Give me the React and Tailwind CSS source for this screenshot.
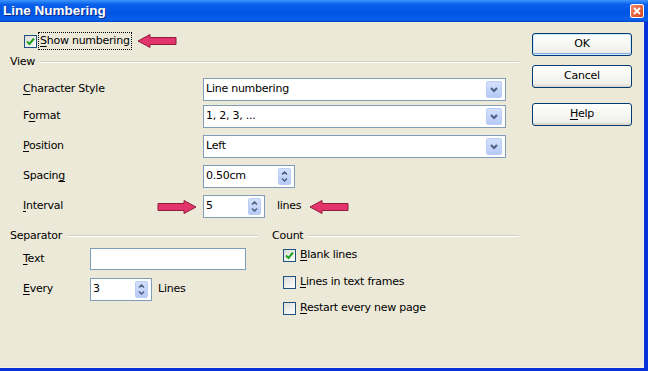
import React from 'react';

const U = ({ children }) => <span className="underline underline-offset-2">{children}</span>;

const Check = ({ checked }) => (
  <span className="flex h-[13px] w-[13px] shrink-0 items-center justify-center border border-[#1c5180] bg-[linear-gradient(135deg,#dcdcd7,#ffffff)]">
    {checked && (
      <svg width="9" height="9" viewBox="0 0 9 9">
        <path d="M1 4.5 L3.5 7 L8 1.5" fill="none" stroke="#21a121" strokeWidth="2" />
      </svg>
    )}
  </span>
);

const Dropdown = ({ value }) => (
  <div className="flex h-[23px] w-[303px] items-center justify-between border border-[#7f9db9] bg-white pl-[2px] pr-[3px]">
    <span>{value}</span>
    <span className="flex h-[17px] w-[16px] items-center justify-center rounded-[2px] border border-[#b9cdf6] bg-[linear-gradient(#d4e1fc,#b6caf6)]">
      <svg width="8" height="6" viewBox="0 0 8 6">
        <path d="M1 1 L4 4 L7 1" fill="none" stroke="#4d6185" strokeWidth="2" />
      </svg>
    </span>
  </div>
);

const Spin = ({ value, w }) => (
  <div className={`flex h-[23px] ${w} items-center justify-between border border-[#7f9db9] bg-white pl-[2px] pr-[3px]`}>
    <span>{value}</span>
    <span className="flex h-[17px] w-[13px] flex-col items-center justify-center gap-[3px] rounded-[2px] border border-[#b9cdf6] bg-[linear-gradient(#d4e1fc,#b6caf6)]">
      <svg width="7" height="4" viewBox="0 0 7 4">
        <path d="M1 3.5 L3.5 1 L6 3.5" fill="none" stroke="#4d6185" strokeWidth="1.5" />
      </svg>
      <svg width="7" height="4" viewBox="0 0 7 4">
        <path d="M1 0.5 L3.5 3 L6 0.5" fill="none" stroke="#4d6185" strokeWidth="1.5" />
      </svg>
    </span>
  </div>
);

const Arrow = ({ dir = 'left' }) => (
  <svg width="40" height="14" viewBox="0 0 40 14" className={dir === 'right' ? 'shrink-0 -scale-x-100' : 'shrink-0'}>
    <polygon
      points="1,7 13,0.5 13,3.5 39,3.5 39,10.5 13,10.5 13,13.5"
      fill="#e3346b"
      stroke="#8f1d3c"
      strokeWidth="1"
      strokeLinejoin="miter"
    />
  </svg>
);

const GroupHeader = ({ title }) => (
  <div className="flex h-[13px] items-center gap-[5px] leading-[13px]">
    <span>{title}</span>
    <div className="flex-1 border-t border-b border-t-[#d0d0bf] border-b-white" />
  </div>
);

const Row = ({ label, className, children }) => (
  <div className={`flex h-[23px] items-center ${className}`}>
    <span className="w-[193px] pl-[13px]">{label}</span>
    {children}
  </div>
);

const Button = ({ children, primary, className }) => (
  <button
    className={`flex h-[23px] w-[100px] items-center justify-center rounded-[3px] border border-[#003c74] bg-[linear-gradient(#ffffff,#f0f0ea_85%,#d6d0c5)] ${primary ? 'shadow-[inset_0_0_0_1px_#cee7ff,inset_0_-1px_0_1px_#89ade4]' : ''} ${className}`}
  >
    {children}
  </button>
);

export default function App() {
  return (
    <div className="flex h-[371px] w-[648px] flex-col overflow-hidden bg-[#0831d9] font-['DejaVu_Sans',sans-serif] text-[11px] tracking-[-0.25px] text-black">
      <div className="flex h-[22px] shrink-0 items-center justify-between bg-[linear-gradient(#3d95ff,#0a5fea_20%,#0055e5_60%,#0a5fea_90%,#0046c8)] pl-[3px] pr-[4px]">
        <span className="font-['Liberation_Sans',sans-serif] text-[13.5px] font-bold tracking-normal text-white [text-shadow:1px_1px_#0c2a8a]">
          Line Numbering
        </span>
        <span className="flex h-[14px] w-[14px] items-center justify-center rounded-[2px] border border-white bg-[linear-gradient(135deg,#f08a6a,#d8431e)]">
          <svg width="8" height="8" viewBox="0 0 8 8">
            <path d="M1 1 L7 7 M7 1 L1 7" stroke="white" strokeWidth="1.8" />
          </svg>
        </span>
      </div>
      <div className="mb-[3px] mr-[4px] flex flex-1 border-b border-r border-[#f4f2e8] bg-[#ece9d8]">
        <div className="flex w-[519px] flex-col pl-[10px]">
          <div className="ml-[14px] mt-[10px] flex h-[18px] items-center">
            <Check checked />
            <span className="ml-[1px] border border-dotted border-black px-[1px] leading-[16px]">
              <U>S</U>how numbering
            </span>
            <span className="ml-[5px]">
              <Arrow />
            </span>
          </div>

          <div className="mt-[5px]">
            <GroupHeader title="View" />
          </div>

          <Row label={<><U>C</U>haracter Style</>} className="mt-[10px]">
            <Dropdown value="Line numbering" />
          </Row>
          <Row label={<>F<U>o</U>rmat</>} className="mt-[4px]">
            <Dropdown value="1, 2, 3, ..." />
          </Row>
          <Row label={<><U>P</U>osition</>} className="mt-[7px]">
            <Dropdown value="Left" />
          </Row>
          <Row label={<>Spacin<U>g</U></>} className="mt-[7px]">
            <Spin value="0.50cm" w="w-[92px]" />
          </Row>
          <div className="mt-[7px] flex h-[23px] items-center">
            <span className="w-[147px] pl-[13px]">
              <U>I</U>nterval
            </span>
            <span className="w-[46px]">
              <Arrow dir="right" />
            </span>
            <Spin value="5" w="w-[62px]" />
            <span className="ml-[12px]">lines</span>
            <span className="ml-[8px]">
              <Arrow />
            </span>
          </div>

          <div className="mt-[11px] flex gap-[14px]">
            <div className="flex w-[248px] flex-col">
              <GroupHeader title="Separator" />
              <div className="mt-[6px] flex h-[22px] items-center">
                <span className="w-[80px] pl-[13px]">
                  <U>T</U>ext
                </span>
                <div className="h-[22px] w-[156px] border border-[#7f9db9] bg-white" />
              </div>
              <div className="mt-[8px] flex h-[22px] items-center">
                <span className="w-[80px] pl-[13px]">
                  <U>E</U>very
                </span>
                <Spin value="3" w="w-[62px] h-[22px]" />
                <span className="ml-[6px]">Lines</span>
              </div>
            </div>
            <div className="flex flex-1 flex-col">
              <GroupHeader title="Count" />
              <div className="ml-[11px] mt-[7px] flex h-[13px] items-center gap-[4px]">
                <Check checked />
                <span>
                  <U>B</U>lank lines
                </span>
              </div>
              <div className="ml-[11px] mt-[14px] flex h-[13px] items-center gap-[4px]">
                <Check />
                <span>
                  <U>L</U>ines in text frames
                </span>
              </div>
              <div className="ml-[11px] mt-[13px] flex h-[13px] items-center gap-[4px]">
                <Check />
                <span>
                  <U>R</U>estart every new page
                </span>
              </div>
            </div>
          </div>
        </div>

        <div className="ml-[13px] mt-[11px] flex flex-col">
          <Button primary>OK</Button>
          <Button className="mt-[9px]">Cancel</Button>
          <Button className="mt-[15px]">
            <span>
              <U>H</U>elp
            </span>
          </Button>
        </div>
      </div>
    </div>
  );
}
